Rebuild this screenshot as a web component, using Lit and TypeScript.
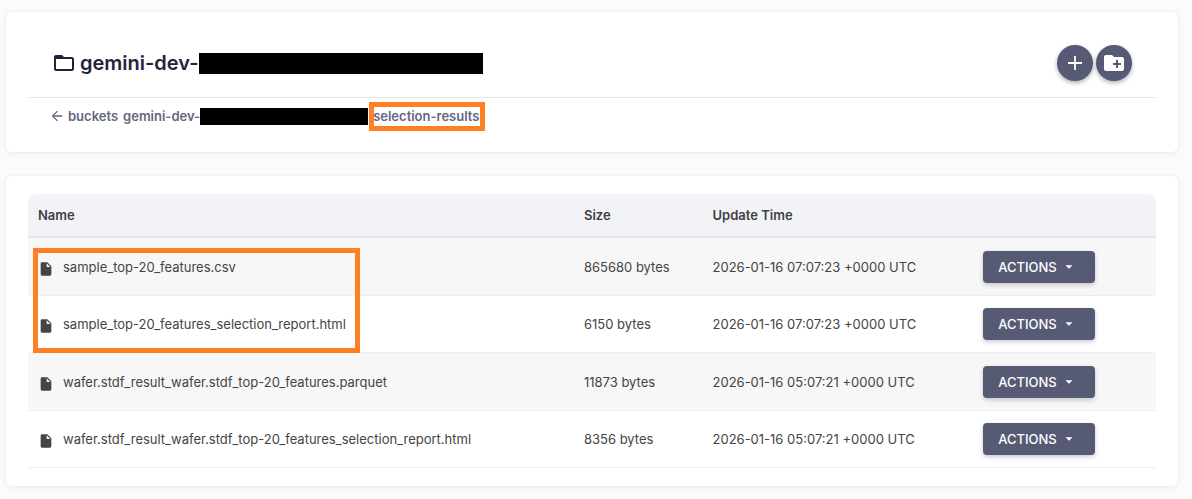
import { LitElement, html, css, svg } from "lit";
import { customElement, property } from "lit/decorators.js";

interface BucketObject {
  name: string;
  size: string;
  updated: string;
}

const icons = {
  folder: svg`<path d="M20 6h-8l-2-2H4c-1.100 0-1.990.9-1.990 2L2 18c0 1.100.9 2 2 2h16c1.100 0 2-.9 2-2V8c0-1.100-.9-2-2-2zm0 12H4V8h16v10z"/>`,
  folderPlus: svg`<path d="M20 6h-8l-2-2H4c-1.110 0-1.990.89-1.990 2L2 18c0 1.110.89 2 2 2h16c1.110 0 2-.89 2-2V8c0-1.110-.89-2-2-2zm-1 8h-3v3h-2v-3h-3v-2h3V9h2v3h3v2z"/>`,
  plus: svg`<path d="M19 12.900h-6.100V19h-1.800v-6.100H5v-1.800h6.100V5h1.800v6.100H19z"/>`,
  back: svg`<path d="M20 11H7.830l5.590-5.590L12 4l-8 8 8 8 1.410-1.410L7.830 13H20v-2z"/>`,
  file: svg`<path d="M13 9V3.500L18.500 9M6 2c-1.110 0-2 .89-2 2v16a2 2 0 0 0 2 2h12a2 2 0 0 0 2-2V8l-6-6H6z"/>`,
  caret: svg`<path d="M6 9h12l-6 6z"/>`,
};

@customElement("bucket-header")
export class BucketHeader extends LitElement {
  static styles = css`
    :host { display: block; }
    .card {
      background: #fff;
      border-radius: 6px;
      box-shadow: 0 2px 8px rgba(50, 50, 71, 0.06), 0 0 2px rgba(50, 50, 71, 0.1);
      padding: 22px;
    }
    .top {
      display: flex;
      align-items: center;
      justify-content: space-between;
      padding: 11px 24px 16px;
      border-bottom: 1px solid #e6e7e9;
    }
    .title {
      display: flex;
      align-items: center;
      margin: 0;
      font-size: 20px;
      line-height: 24px;
      font-weight: 600;
      color: #22233c;
    }
    .title-icon { width: 24px; height: 24px; margin-right: 4px; fill: currentColor; }
    .masked { background: #000; }
    .masked-title { width: 284px; height: 21px; }
    .tools { display: flex; gap: 3px; }
    .round {
      display: grid;
      place-items: center;
      width: 36px;
      height: 36px;
      padding: 0;
      border: 0;
      border-radius: 50%;
      background: #575a75;
      color: #fff;
      box-shadow: 0 2px 4px rgba(30, 30, 50, 0.35);
    }
    .round-icon { width: 24px; height: 24px; fill: currentColor; }
    .crumbs {
      display: flex;
      align-items: center;
      gap: 5px;
      padding: 8px 21px 4px;
      font-size: 13px;
      line-height: 20px;
      font-weight: 600;
    }
    .crumb {
      position: relative;
      display: flex;
      align-items: center;
      color: #65677f;
      text-decoration: none;
    }
    .back-icon { width: 16px; height: 16px; margin-right: 3px; fill: currentColor; }
    .masked-crumb { width: 168px; height: 17px; }
    .marked::after {
      content: "";
      position: absolute;
      inset: -4px -6px -5px -4px;
      border: 5px solid #ff8022;
    }
  `;

  render() {
    return html`
      <header class="card">
        <div class="top">
          <h1 class="title">
            <svg class="title-icon" viewBox="0 0 24 24" aria-hidden="true">${icons.folder}</svg>
            gemini-dev-<span class="masked masked-title"></span>
          </h1>
          <div class="tools">
            <button class="round" type="button" aria-label="Upload file">
              <svg class="round-icon" viewBox="0 0 24 24" aria-hidden="true">${icons.plus}</svg>
            </button>
            <button class="round" type="button" aria-label="New folder">
              <svg class="round-icon" viewBox="0 0 24 24" aria-hidden="true">${icons.folderPlus}</svg>
            </button>
          </div>
        </div>
        <nav class="crumbs" aria-label="Breadcrumb">
          <a class="crumb" href="#buckets">
            <svg class="back-icon" viewBox="0 0 24 24" aria-hidden="true">${icons.back}</svg>buckets
          </a>
          <a class="crumb" href="#bucket">gemini-dev-<span class="masked masked-crumb"></span></a>
          <a class="crumb marked" href="#selection-results">selection-results</a>
        </nav>
      </header>
    `;
  }
}

@customElement("object-table")
export class ObjectTable extends LitElement {
  @property({ attribute: false }) objects: BucketObject[] = [];

  static styles = css`
    :host { display: block; }
    .card {
      background: #fff;
      border-radius: 6px;
      box-shadow: 0 2px 8px rgba(50, 50, 71, 0.06), 0 0 2px rgba(50, 50, 71, 0.1);
      padding: 18px 22px;
    }
    .frame { position: relative; }
    .table {
      width: 100%;
      table-layout: fixed;
      border-collapse: separate;
      border-spacing: 0;
      font-size: 13px;
      line-height: 20px;
      color: #444;
    }
    .col-name { width: 48.4%; }
    .col-size { width: 11.4%; }
    .col-time { width: 24%; }
    .head {
      padding: 11px 10px;
      border-bottom: 2px solid #e3e5ea;
      background: #f2f3f7;
      font-weight: 600;
      text-align: left;
      color: #3f4044;
    }
    .head:first-child { border-top-left-radius: 8px; }
    .head:last-child { border-top-right-radius: 8px; }
    .cell { padding: 12px 10px; border-bottom: 1px solid #eeeeef; }
    .row:nth-child(odd) .cell { padding-top: 13px; background: #f7f7f7; }
    .file { display: flex; align-items: center; gap: 9px; }
    .file-icon { width: 16px; height: 16px; margin-top: 3px; fill: #444; }
    .link { color: inherit; text-decoration: none; }
    .actions {
      display: flex;
      align-items: center;
      gap: 5px;
      width: 112px;
      height: 32px;
      padding: 0 15px;
      border: 0;
      border-radius: 4px;
      background: #575a75;
      color: #fff;
      font-family: inherit;
      font-size: 13px;
      line-height: 20px;
      font-weight: 500;
      box-shadow: 0 2px 4px rgba(50, 50, 90, 0.25);
    }
    .caret { width: 14px; height: 14px; fill: currentColor; }
    .highlight {
      position: absolute;
      top: 54px;
      left: 5px;
      width: 317px;
      height: 95px;
      border: 5px solid #ff8022;
      pointer-events: none;
    }
  `;

  render() {
    return html`
      <section class="card">
        <div class="frame">
          <table class="table">
            <colgroup>
              <col class="col-name" /><col class="col-size" /><col class="col-time" /><col />
            </colgroup>
            <thead>
              <tr>
                <th class="head" scope="col">Name</th>
                <th class="head" scope="col">Size</th>
                <th class="head" scope="col">Update Time</th>
                <th class="head" scope="col" aria-label="Actions"></th>
              </tr>
            </thead>
            <tbody>
              ${this.objects.map(
                (o) => html`
                  <tr class="row">
                    <td class="cell">
                      <div class="file">
                        <svg class="file-icon" viewBox="0 0 24 24" aria-hidden="true">${icons.file}</svg>
                        <a class="link" href="#${o.name}">${o.name}</a>
                      </div>
                    </td>
                    <td class="cell">${o.size}</td>
                    <td class="cell">${o.updated}</td>
                    <td class="cell">
                      <button class="actions" type="button" aria-haspopup="menu">
                        ACTIONS
                        <svg class="caret" viewBox="0 0 24 24" aria-hidden="true">${icons.caret}</svg>
                      </button>
                    </td>
                  </tr>
                `
              )}
            </tbody>
          </table>
          <div class="highlight"></div>
        </div>
      </section>
    `;
  }
}

@customElement("app-root")
export class AppRoot extends LitElement {
  private objects: BucketObject[] = [
    { name: "sample_top-20_features.csv", size: "865680 bytes", updated: "2026-01-16 07:07:23 +0000 UTC" },
    { name: "sample_top-20_features_selection_report.html", size: "6150 bytes", updated: "2026-01-16 07:07:23 +0000 UTC" },
    { name: "wafer.stdf_result_wafer.stdf_top-20_features.parquet", size: "11873 bytes", updated: "2026-01-16 05:07:21 +0000 UTC" },
    { name: "wafer.stdf_result_wafer.stdf_top-20_features_selection_report.html", size: "8356 bytes", updated: "2026-01-16 05:07:21 +0000 UTC" },
  ];

  static styles = css`
    :host {
      display: block;
      box-sizing: border-box;
      min-height: 100vh;
      background: #fbfbfd;
      font-family: Inter, "Liberation Sans", sans-serif;
    }
    .page {
      display: flex;
      flex-direction: column;
      gap: 24px;
      padding: 12px 14px 13px 6px;
    }
  `;

  render() {
    return html`
      <main class="page">
        <bucket-header></bucket-header>
        <object-table .objects=${this.objects}></object-table>
      </main>
    `;
  }
}
